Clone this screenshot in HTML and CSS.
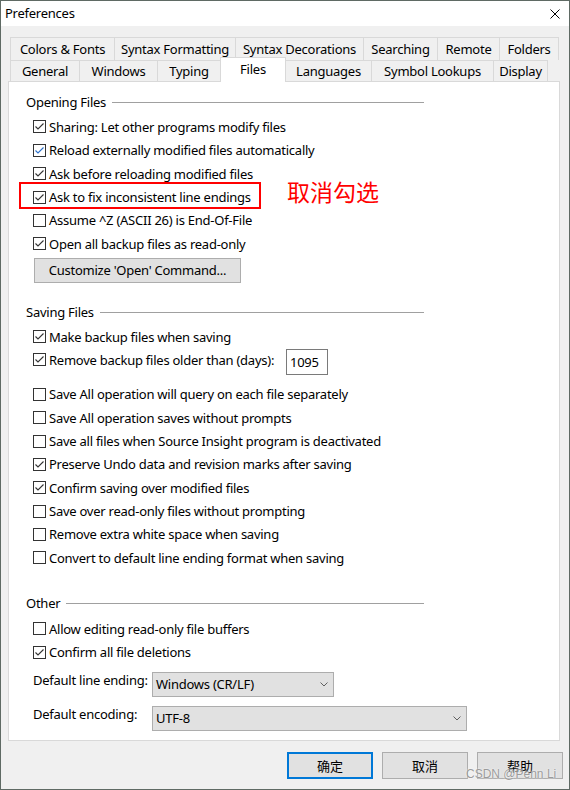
FILE: index.html
```html
<!DOCTYPE html>
<html lang="en">
<head>
    <meta charset="UTF-8">
    <title>Preferences</title>
    <link rel="stylesheet" href="styles.css">
</head>
<body>
    <div class="window">
        <!-- Title bar -->
        <div class="titlebar">
            <span class="title">Preferences</span>
            <svg class="close" width="10" height="10" viewBox="0 0 10 10">
                <path d="M0.5 0.5 L9.5 9.5 M9.5 0.5 L0.5 9.5" stroke="#000" stroke-width="1" fill="none"/>
            </svg>
        </div>

        <div class="client">
            <!-- Two rows of tabs -->
            <div class="tab-row row-back">
                <div class="tab">Colors &amp; Fonts</div>
                <div class="tab">Syntax Formatting</div>
                <div class="tab">Syntax Decorations</div>
                <div class="tab">Searching</div>
                <div class="tab">Remote</div>
                <div class="tab">Folders</div>
            </div>
            <div class="tab-row row-front">
                <div class="tab">General</div>
                <div class="tab">Windows</div>
                <div class="tab">Typing</div>
                <div class="tab selected">Files</div>
                <div class="tab">Languages</div>
                <div class="tab">Symbol Lookups</div>
                <div class="tab">Display</div>
            </div>

            <div class="panel">
                <!-- Opening Files -->
                <div class="legend first"><span>Opening Files</span></div>
                <div class="options">
                    <div class="option"><span class="box checked"></span>Sharing: Let other programs modify files</div>
                    <div class="option"><span class="box checked focus"></span>Reload externally modified files automatically</div>
                    <div class="option"><span class="box checked"></span>Ask before reloading modified files</div>
                    <div class="option"><span class="box checked"></span>Ask to fix inconsistent line endings</div>
                    <div class="option"><span class="box"></span>Assume ^Z (ASCII 26) is End-Of-File</div>
                    <div class="option"><span class="box checked"></span>Open all backup files as read-only</div>
                </div>
                <button class="btn customize">Customize 'Open' Command...</button>

                <!-- Saving Files -->
                <div class="legend"><span>Saving Files</span></div>
                <div class="options">
                    <div class="option"><span class="box checked"></span>Make backup files when saving</div>
                    <div class="option"><span class="box checked"></span><span class="days-label">Remove backup files older than (days):</span><span class="number">1095</span></div>
                    <div class="option spaced"><span class="box"></span>Save All operation will query on each file separately</div>
                    <div class="option"><span class="box"></span>Save All operation saves without prompts</div>
                    <div class="option"><span class="box"></span>Save all files when Source Insight program is deactivated</div>
                    <div class="option"><span class="box checked"></span>Preserve Undo data and revision marks after saving</div>
                    <div class="option"><span class="box checked"></span>Confirm saving over modified files</div>
                    <div class="option"><span class="box"></span>Save over read-only files without prompting</div>
                    <div class="option"><span class="box"></span>Remove extra white space when saving</div>
                    <div class="option"><span class="box"></span>Convert to default line ending format when saving</div>
                </div>

                <!-- Other -->
                <div class="legend last"><span>Other</span></div>
                <div class="options other">
                    <div class="option"><span class="box"></span>Allow editing read-only file buffers</div>
                    <div class="option"><span class="box checked"></span>Confirm all file deletions</div>
                </div>
                <div class="field">
                    <label>Default line ending:</label>
                    <div class="select short"><span>Windows (CR/LF)</span><i class="chevron"></i></div>
                </div>
                <div class="field">
                    <label>Default encoding:</label>
                    <div class="select long"><span>UTF-8</span><i class="chevron"></i></div>
                </div>

                <!-- annotation drawn over the dialog -->
                <div class="mark"></div>
                <div class="note">取消勾选</div>
            </div>

            <div class="footer">
                <button class="btn action primary">确定</button>
                <button class="btn action">取消</button>
                <button class="btn action">帮助</button>
            </div>
        </div>

        <div class="watermark">CSDN @Penn Li</div>
    </div>
</body>
</html>
```

FILE: styles.css
```css
* {
    box-sizing: border-box;
}

body {
    margin: 0;
    font-family: "Noto Sans", "Noto Sans CJK SC", sans-serif;
    font-size: 13px;
    letter-spacing: -0.25px;
    color: #000;
    background: #fff;
}

.window {
    position: relative;
    width: 570px;
    height: 790px;
    border: 1px solid #5f6a64;
    background: #f0f0f0;
    display: flex;
    flex-direction: column;
}

.titlebar {
    height: 25px;
    background: #fff;
    display: flex;
    align-items: center;
    justify-content: space-between;
    padding: 0 9px 0 4px;
}

.title {
    line-height: 1;
}

.client {
    flex: 1;
    padding: 11px 0 0 7px;
    display: flex;
    flex-direction: column;
}

/* tabs */
.tab-row {
    display: flex;
    margin-left: 2px;
}

.row-back {
    height: 23px;
}

.row-front {
    height: 21px;
    align-items: flex-end;
}

.tab {
    height: 100%;
    display: flex;
    align-items: center;
    justify-content: center;
    border: 1px solid #d9d9d9;
    border-bottom: none;
    background: #f0f0f0;
    margin-left: -1px;
    white-space: nowrap;
}

.tab:first-child {
    margin-left: 0;
}

.row-back .tab:nth-child(1) { width: 105px; }
.row-back .tab:nth-child(2) { width: 122px; }
.row-back .tab:nth-child(3) { width: 129px; }
.row-back .tab:nth-child(4) { width: 75px; }
.row-back .tab:nth-child(5) { width: 63px; }
.row-back .tab:nth-child(6) { width: 60px; }

.row-front .tab:nth-child(1) { width: 70px; }
.row-front .tab:nth-child(2) { width: 79px; }
.row-front .tab:nth-child(3) { width: 64px; }
.row-front .tab:nth-child(4) { width: 66px; }
.row-front .tab:nth-child(5) { width: 87px; }
.row-front .tab:nth-child(6) { width: 123px; }
.row-front .tab:nth-child(7) { width: 55px; }

.tab.selected {
    position: relative;
    z-index: 2;
    height: 25px;
    margin-bottom: -1px;
    padding-bottom: 3px;
    background: #fff;
}

/* white page */
.panel {
    position: relative;
    width: 552px;
    height: 660px;
    background: #fff;
    border: 1px solid #d9d9d9;
    padding-left: 17px;
}

.legend {
    display: flex;
    align-items: center;
    width: 398px;
    height: 20px;
    margin-top: 19px;
}

.legend.first {
    margin-top: 10px;
}

.legend.last {
    margin-top: 23.3px;
}

.legend::after {
    content: "";
    flex: 1;
    height: 1px;
    margin: 1px 0 0 6px;
    background: #a0a0a0;
}

.options {
    margin: 3.3px 0 0 7px;
}

.options.other {
    margin-top: 4.3px;
}

.option {
    height: 23.35px;
    display: flex;
    align-items: center;
    white-space: nowrap;
}

.option.spaced {
    margin-top: 11px;
}

.box {
    flex: none;
    width: 13px;
    height: 13px;
    margin-right: 3px;
    border: 1px solid #333;
    background: #fff no-repeat center;
}

.box.checked {
    background-image: url("data:image/svg+xml;utf8,<svg xmlns='http://www.w3.org/2000/svg' width='11' height='11' viewBox='0 0 11 11'><path d='M1.5 5.5 L4 8 L9.5 2.5' fill='none' stroke='%23333' stroke-width='1.1'/></svg>");
}

.box.checked.focus {
    background-image: url("data:image/svg+xml;utf8,<svg xmlns='http://www.w3.org/2000/svg' width='11' height='11' viewBox='0 0 11 11'><path d='M1.5 5.5 L4 8 L9.5 2.5' fill='none' stroke='%232a6fc9' stroke-width='1.1'/></svg>");
}

.days-label {
    width: 237px;
}

.number {
    width: 42px;
    height: 26px;
    margin-top: 4px;
    padding-left: 3px;
    border: 1px solid #7a7a7a;
    display: flex;
    align-items: center;
}

.btn {
    font-family: "Noto Sans", "Noto Sans CJK SC", sans-serif;
    font-size: 13px;
    letter-spacing: -0.25px;
    color: #000;
    background: #e1e1e1;
    border: 1px solid #adadad;
    padding: 0;
}

.btn.customize {
    display: block;
    width: 207px;
    height: 25px;
    margin: 2.3px 0 0 8px;
}

.field {
    display: flex;
    align-items: flex-start;
    margin: 9px 0 0 7px;
}

.options.other + .field {
    margin-top: 8.3px;
}

.field label {
    width: 119px;
    line-height: 17px;
    white-space: nowrap;
}

.select {
    height: 25px;
    border: 1px solid #adadad;
    background: #e1e1e1;
    display: flex;
    align-items: center;
    justify-content: space-between;
    padding: 0 5px 0 3px;
}

.select.short {
    width: 182px;
}

.select.long {
    width: 315px;
}

.chevron {
    width: 8px;
    height: 5px;
    background: url("data:image/svg+xml;utf8,<svg xmlns='http://www.w3.org/2000/svg' width='8' height='5' viewBox='0 0 8 5'><path d='M0.5 0.5 L4 4 L7.5 0.5' fill='none' stroke='%23606060' stroke-width='1'/></svg>") no-repeat;
}

.footer {
    display: flex;
    justify-content: flex-end;
    gap: 9px;
    margin-top: 11px;
    padding-right: 6px;
}

.btn.action {
    width: 86px;
    height: 27px;
    font-family: "Noto Sans CJK SC", sans-serif;
    letter-spacing: 0;
}

.btn.primary {
    border: 2px solid #0078d7;
}

/* red annotation over the first group */
.mark {
    position: absolute;
    left: 10px;
    top: 100px;
    width: 242px;
    height: 27px;
    border: 2px solid #f00;
}

.note {
    position: absolute;
    left: 278px;
    top: 98px;
    font-family: "Noto Sans CJK SC", sans-serif;
    font-size: 23px;
    line-height: 1;
    letter-spacing: 0;
    color: #f00;
}

.watermark {
    position: absolute;
    left: 465px;
    top: 766px;
    font-family: "Liberation Sans", sans-serif;
    font-size: 12px;
    letter-spacing: 0;
    color: rgba(140, 140, 140, 0.85);
    text-shadow: 0 0 2px #fff;
}
```
